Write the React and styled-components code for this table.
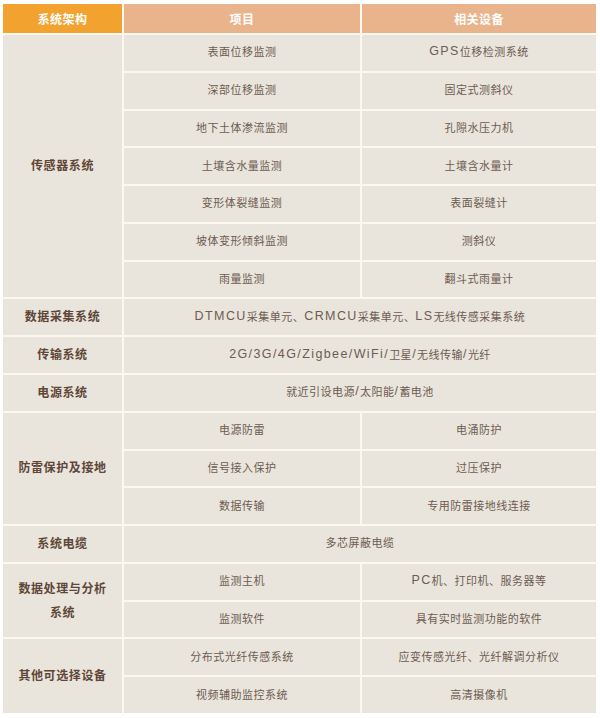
import React from "react";
import styled, { createGlobalStyle } from "styled-components";

const GlobalStyle = createGlobalStyle`
  html, body {
    margin: 0;
    padding: 0;
    background: #ffffff;
  }
  body {
    font-family: "Noto Sans CJK SC", "Noto Sans", sans-serif;
  }
`;

const groups = [
  {
    name: "传感器系统",
    rows: [
      ["表面位移监测", "GPS位移检测系统"],
      ["深部位移监测", "固定式测斜仪"],
      ["地下土体渗流监测", "孔隙水压力机"],
      ["土壤含水量监测", "土壤含水量计"],
      ["变形体裂缝监测", "表面裂缝计"],
      ["坡体变形倾斜监测", "测斜仪"],
      ["雨量监测", "翻斗式雨量计"],
    ],
  },
  { name: "数据采集系统", full: "DTMCU采集单元、CRMCU采集单元、LS无线传感采集系统" },
  { name: "传输系统", full: "2G/3G/4G/Zigbee/WiFi/卫星/无线传输/光纤" },
  { name: "电源系统", full: "就近引设电源/太阳能/蓄电池" },
  {
    name: "防雷保护及接地",
    rows: [
      ["电源防雷", "电涌防护"],
      ["信号接入保护", "过压保护"],
      ["数据传输", "专用防雷接地线连接"],
    ],
  },
  { name: "系统电缆", full: "多芯屏蔽电缆" },
  {
    name: "数据处理与分析系统",
    rows: [
      ["监测主机", "PC机、打印机、服务器等"],
      ["监测软件", "具有实时监测功能的软件"],
    ],
  },
  {
    name: "其他可选择设备",
    rows: [
      ["分布式光纤传感系统", "应变传感光纤、光纤解调分析仪"],
      ["视频辅助监控系统", "高清摄像机"],
    ],
  },
];

const Page = styled.div`
  padding: 4px 4px 0 3px;
`;

const Table = styled.div`
  width: 593px;
  height: 709px;
  display: grid;
  grid-template-columns: 119px 236px 1fr;
  grid-template-rows: 29px repeat(18, 1fr);
  gap: 2px;
  background: #fbf8f0;
`;

const HeadCell = styled.div`
  display: flex;
  align-items: center;
  justify-content: center;
  background: ${(p) => (p.$main ? "#f1a22f" : "#e9b48b")};
  color: #ffffff;
  font-size: 12px;
  font-weight: 700;
  letter-spacing: 0.4px;
`;

const GroupCell = styled.div`
  grid-column: 1;
  grid-row: span ${(p) => p.$span};
  display: flex;
  align-items: center;
  justify-content: center;
  text-align: center;
  padding: 0 11px 2px;
  background: #e9e5dc;
  color: #5f4637;
  font-size: 12px;
  font-weight: 700;
  line-height: 24px;
  letter-spacing: 0.6px;
`;

const Cell = styled.div`
  grid-column: ${(p) => (p.$full ? "2 / 4" : "auto")};
  display: flex;
  align-items: center;
  justify-content: center;
  padding-bottom: 3px;
  background: #e9e5dc;
  color: #6e5b51;
  font-size: 11px;
  letter-spacing: 0.5px;
  white-space: nowrap;
`;

const Latin = styled.span`
  font-family: "Liberation Sans", Arial, sans-serif;
  font-size: 12.5px;
  letter-spacing: 1.4px;
`;

const mixed = (text) =>
  text
    .split(/([A-Za-z0-9/]+)/)
    .map((part, i) =>
      /^[A-Za-z0-9/]+$/.test(part) ? <Latin key={i}>{part}</Latin> : part
    );

export default function App() {
  return (
    <Page>
      <GlobalStyle />
      <Table>
        <HeadCell $main>系统架构</HeadCell>
        <HeadCell>项目</HeadCell>
        <HeadCell>相关设备</HeadCell>
        {groups.map((g) => (
          <React.Fragment key={g.name}>
            <GroupCell $span={g.rows ? g.rows.length : 1}>{g.name}</GroupCell>
            {g.rows ? (
              g.rows.map((r) => (
                <React.Fragment key={r[0]}>
                  <Cell>{mixed(r[0])}</Cell>
                  <Cell>{mixed(r[1])}</Cell>
                </React.Fragment>
              ))
            ) : (
              <Cell $full>{mixed(g.full)}</Cell>
            )}
          </React.Fragment>
        ))}
      </Table>
    </Page>
  );
}
